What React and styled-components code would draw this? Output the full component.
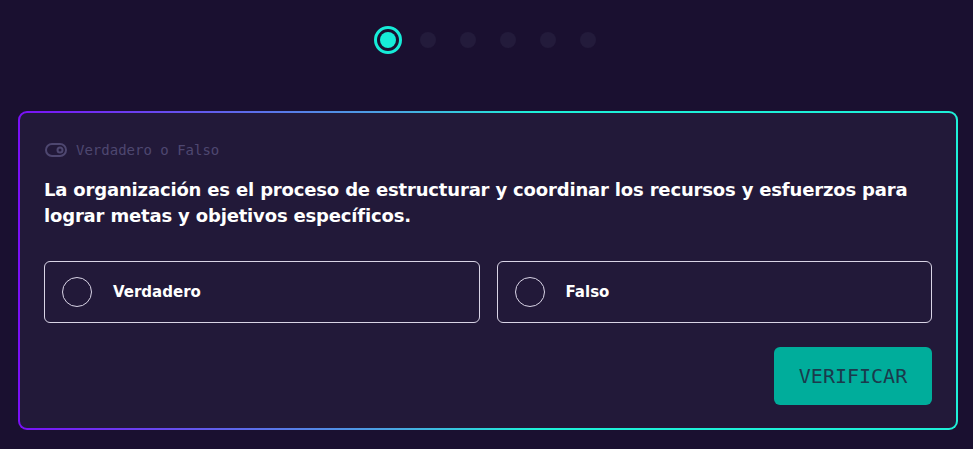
import React from 'react';
import styled, { createGlobalStyle } from 'styled-components';

// global:

const GlobalStyle = createGlobalStyle`
  html, body {
    margin: 0;
    padding: 0;
    background: #1a1030;
  }
  * { box-sizing: border-box; }
`;

// styling:

const Page = styled.div`
  width: 973px;
  height: 449px;
  padding: 26px 15px 0 18px;
  background: #1a1030;
  font-family: "DejaVu Sans", "Noto Sans", sans-serif;
`;

const Steps = styled.div`
  display: flex;
  align-items: center;
  justify-content: center;
  gap: 24px;
  height: 28px;
  margin-left: -6px;
`;

const Dot = styled.span`
  width: 16px;
  height: 16px;
  border-radius: 50%;
  background: #231b3b;
`;

const ActiveDot = styled.span`
  width: 28px;
  height: 28px;
  border-radius: 50%;
  border: 3px solid #16ecd8;
  display: flex;
  align-items: center;
  justify-content: center;
  margin-right: -6px;
  &::after {
    content: '';
    width: 16px;
    height: 16px;
    border-radius: 50%;
    background: #16ecd8;
  }
`;

const CardFrame = styled.div`
  margin-top: 57px;
  padding: 2px;
  border-radius: 9px;
  background: linear-gradient(90deg, #7a10f6 0%, #4aa6e2 40%, #1ef0d8 55%, #1ef0d8 100%);
`;

const Card = styled.section`
  border-radius: 7px;
  background: #221939;
  padding: 29px 24px 23px 24px;
`;

const Kind = styled.div`
  display: flex;
  align-items: center;
  gap: 9px;
  padding-left: 1px;
  font-family: "DejaVu Sans Mono", "Liberation Mono", monospace;
  font-size: 14px;
  color: #4e4770;
  height: 16px;
`;

const Question = styled.h2`
  margin: 19px 0 0 0;
  font-size: 18px;
  line-height: 26px;
  font-weight: 700;
  color: #ffffff;
  letter-spacing: -0.17px;
`;

const Options = styled.div`
  display: grid;
  grid-template-columns: 1fr 1fr;
  gap: 17px;
  margin-top: 32px;
`;

const Option = styled.button`
  display: flex;
  align-items: center;
  gap: 21px;
  height: 62px;
  padding: 0 17px;
  border: 1px solid #d9d4e6;
  border-radius: 6px;
  background: transparent;
  color: #ffffff;
  font-family: "DejaVu Sans", "Noto Sans", sans-serif;
  font-size: 15px;
  font-weight: 700;
  cursor: pointer;
  text-align: left;
`;

const Radio = styled.span`
  width: 30px;
  height: 30px;
  border-radius: 50%;
  border: 1.5px solid #d9d4e6;
  flex: none;
`;

const Footer = styled.div`
  display: flex;
  justify-content: flex-end;
  margin-top: 24px;
`;

const Verify = styled.button`
  width: 158px;
  height: 58px;
  border: none;
  border-radius: 6px;
  background: #00ad9b;
  color: #1b3a4c;
  font-family: "DejaVu Sans Mono", "Liberation Mono", monospace;
  font-size: 20px;
  cursor: pointer;
`;

const ToggleIcon = () => (
  <svg width="22" height="14" viewBox="0 0 22 14" fill="none">
    <rect x="1" y="1" width="20" height="12" rx="6" stroke="#4e4770" strokeWidth="2" />
    <circle cx="15" cy="7" r="2.5" stroke="#4e4770" strokeWidth="2" />
  </svg>
);

// react:

const App = () => {
  const choices = ['Verdadero', 'Falso'];
  return (
    <>
      <GlobalStyle />
      <Page>
        <Steps>
          <ActiveDot />
          <Dot />
          <Dot />
          <Dot />
          <Dot />
          <Dot />
        </Steps>
        <CardFrame>
          <Card>
            <Kind>
              <ToggleIcon />
              Verdadero o Falso
            </Kind>
            <Question>
              La organización es el proceso de estructurar y coordinar los recursos y esfuerzos para lograr metas y objetivos específicos.
            </Question>
            <Options>
              {choices.map((c) => (
                <Option key={c}>
                  <Radio />
                  {c}
                </Option>
              ))}
            </Options>
            <Footer>
              <Verify>VERIFICAR</Verify>
            </Footer>
          </Card>
        </CardFrame>
      </Page>
    </>
  );
};

export default App;
